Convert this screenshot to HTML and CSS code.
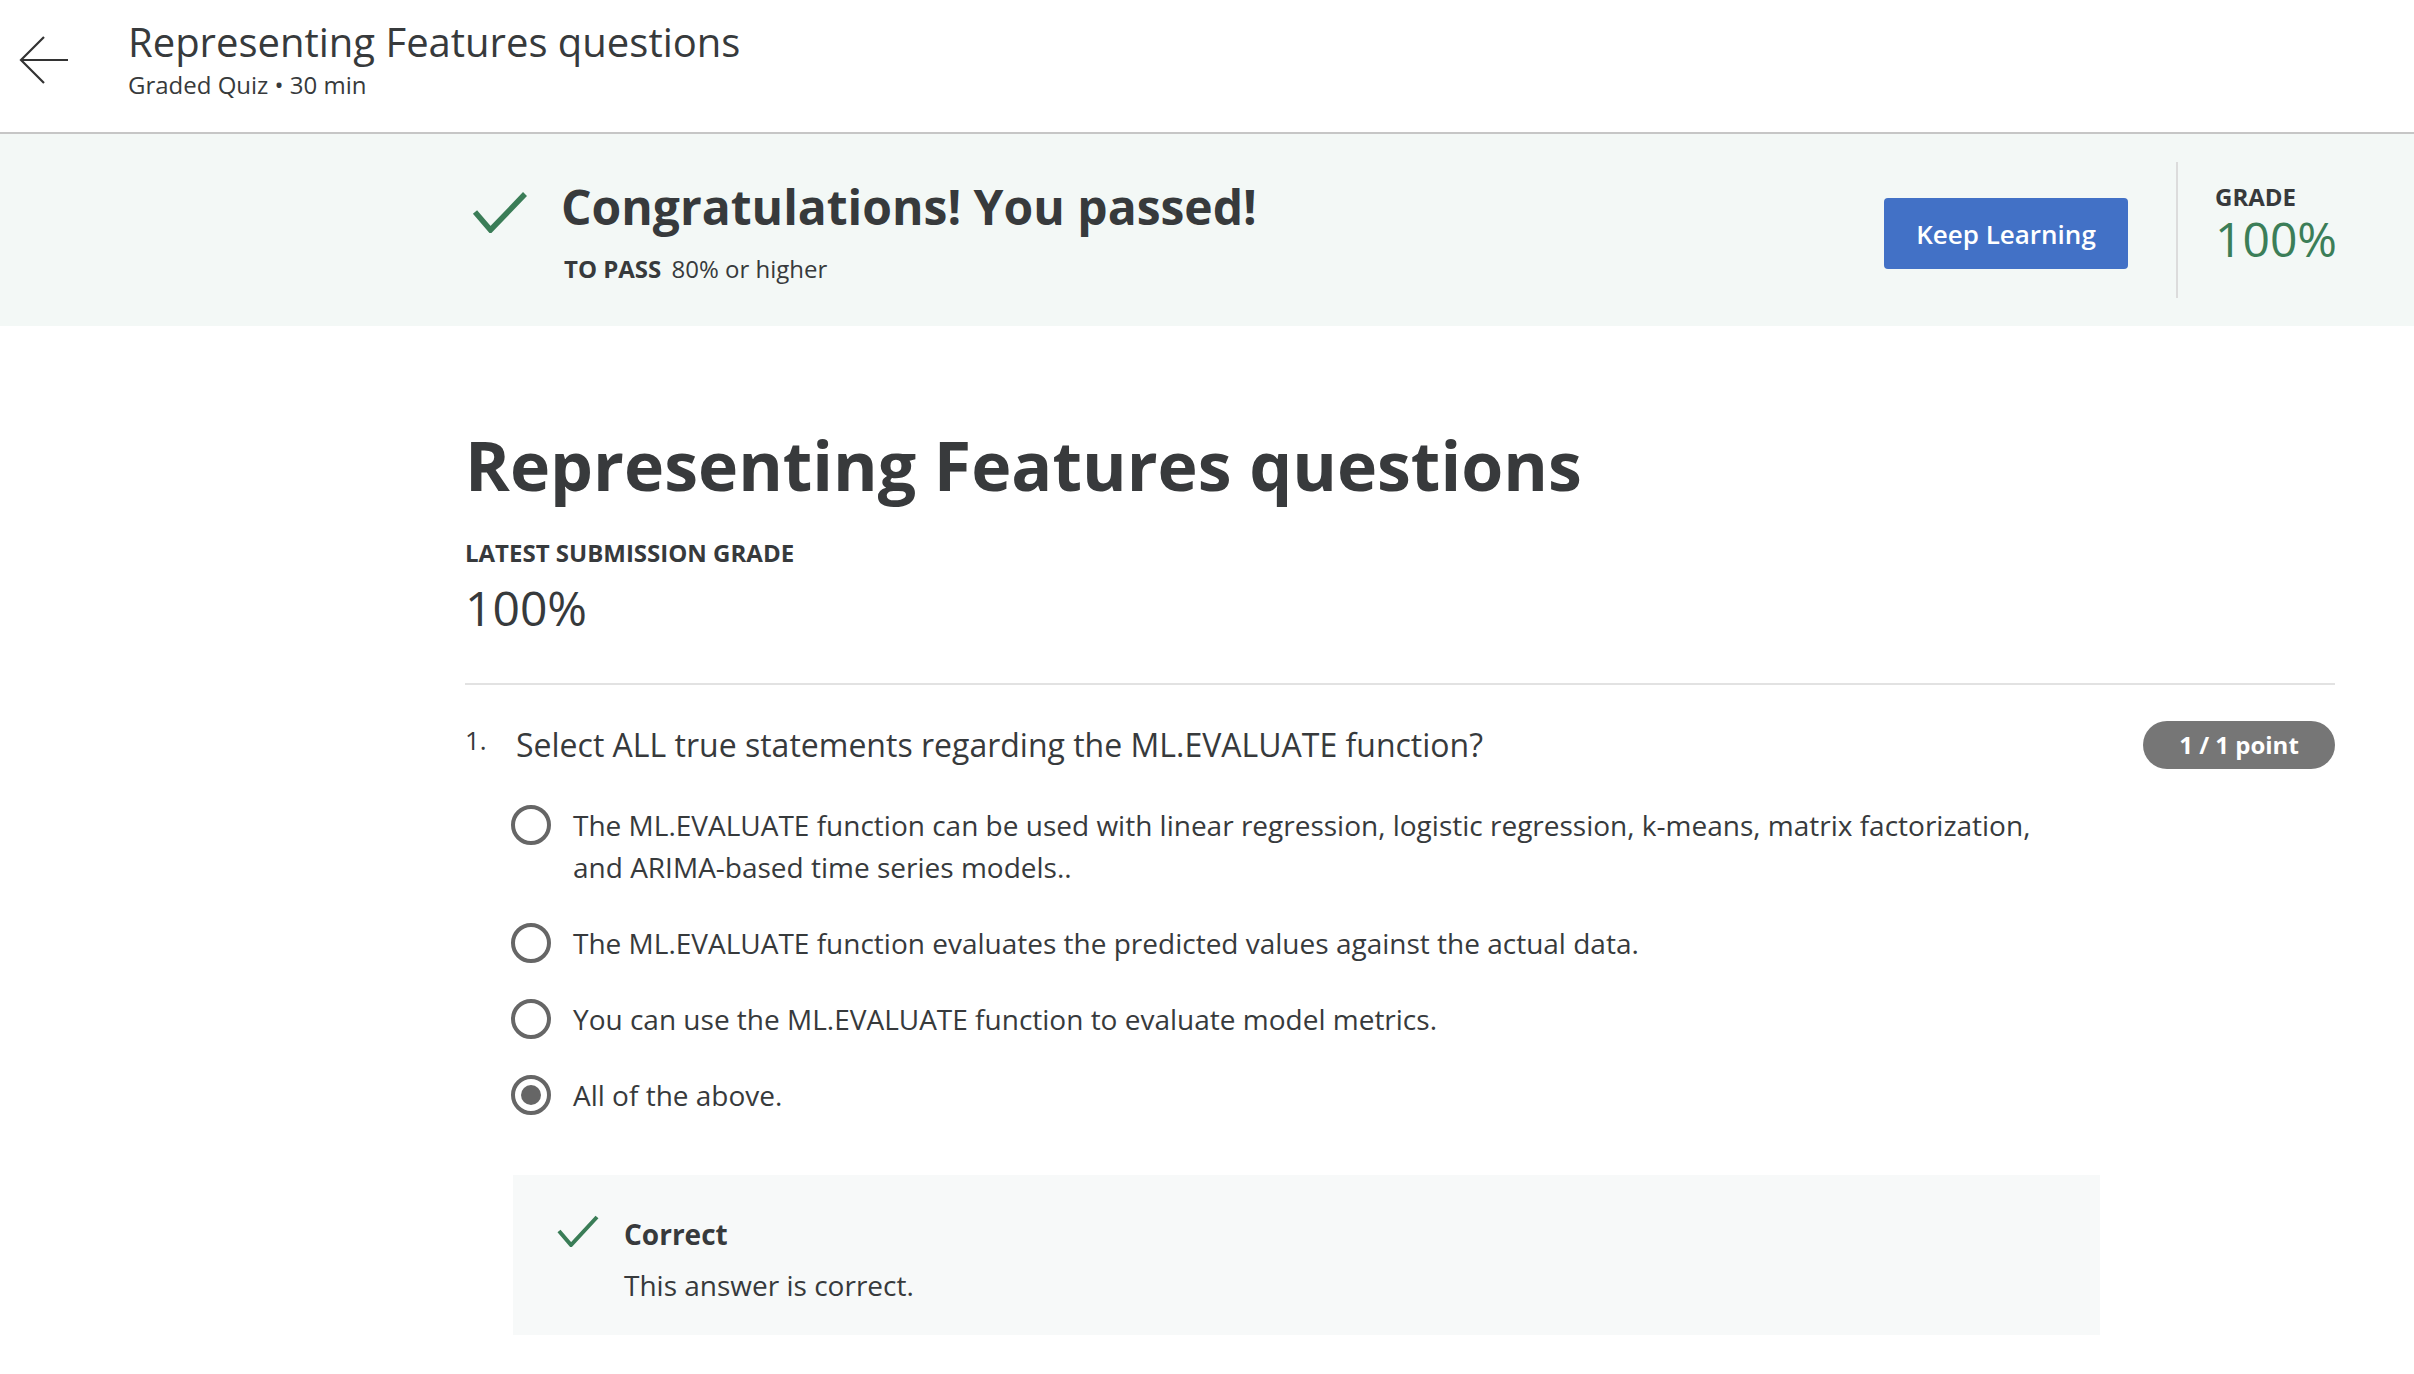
FILE: index.html
```html
<!DOCTYPE html>
<html lang="en">
<head>
<meta charset="utf-8">
<title>Representing Features questions</title>
<link rel="stylesheet" href="styles.css">
</head>
<body>
<header class="topbar">
  <a class="back" href="#" aria-label="Back">
    <svg width="50" height="50" viewBox="0 0 50 50"><path d="M25 2 L2 25 L25 48 M2 25 H49" fill="none" stroke="#333" stroke-width="2.2"/></svg>
  </a>
  <div class="titles">
    <div class="title">Representing Features questions</div>
    <div class="subtitle">Graded Quiz • 30 min</div>
  </div>
</header>

<section class="banner">
  <div class="banner-inner">
    <div class="pass">
      <svg class="check-lg" width="56" height="42" viewBox="0 0 56 42"><path d="M3 21 L18.5 39 L53 3" fill="none" stroke="#3a7d57" stroke-width="5.5"/></svg>
      <div class="pass-text">
        <div class="congrats">Congratulations! You passed!</div>
        <div class="topass"><span class="topass-label">TO PASS</span> 80% or higher</div>
      </div>
    </div>
    <div class="actions">
      <button class="keep">Keep Learning</button>
      <div class="vdiv"></div>
      <div class="grade">
        <div class="grade-label">GRADE</div>
        <div class="grade-value">100%</div>
      </div>
    </div>
  </div>
</section>

<main class="content">
  <h1 class="page-title">Representing Features questions</h1>
  <div class="latest-label">LATEST SUBMISSION GRADE</div>
  <div class="latest-value">100%</div>
  <div class="rule"></div>

  <div class="question">
    <div class="qnum">1.</div>
    <div class="qtext">Select ALL true statements regarding the ML.EVALUATE function?</div>
    <div class="points">1 / 1 point</div>
  </div>

  <div class="options">
    <div class="option">
      <span class="radio"></span>
      <span class="opt-text">The ML.EVALUATE function can be used with linear regression, logistic regression, k-means, matrix factorization, and ARIMA-based time series models..</span>
    </div>
    <div class="option">
      <span class="radio"></span>
      <span class="opt-text">The ML.EVALUATE function evaluates the predicted values against the actual data.</span>
    </div>
    <div class="option">
      <span class="radio"></span>
      <span class="opt-text">You can use the ML.EVALUATE function to evaluate model metrics.</span>
    </div>
    <div class="option">
      <span class="radio selected"></span>
      <span class="opt-text">All of the above.</span>
    </div>
  </div>

  <div class="feedback">
    <svg class="check-sm" width="42" height="32" viewBox="0 0 42 32"><path d="M2 16 L14 30 L40 2" fill="none" stroke="#3a7d57" stroke-width="4"/></svg>
    <div class="fb-text">
      <div class="fb-title">Correct</div>
      <div class="fb-body">This answer is correct.</div>
    </div>
  </div>
</main>
</body>
</html>
```

FILE: styles.css
```css
html, body {
  margin: 0;
  padding: 0;
  background: #ffffff;
}
body {
  font-family: "Open Sans", "Noto Sans", Arial, sans-serif;
  color: #373a3c;
}

/* top bar */
.topbar {
  height: 132px;
  border-bottom: 2px solid #c6c6c6;
  display: flex;
  align-items: flex-start;
  padding-left: 19px;
  box-sizing: content-box;
}
.back {
  display: block;
  margin-top: 35px;
  width: 50px;
  height: 50px;
}
.back svg { display: block; }
.titles {
  margin-left: 59px;
  padding-top: 18px;
}
.title {
  font-size: 40px;
  line-height: 48px;
  font-weight: 400;
  color: #373a3c;
}
.subtitle {
  margin-top: 3px;
  font-size: 24px;
  line-height: 32px;
  color: #373a3c;
}

/* banner */
.banner {
  background: #f3f8f6;
  height: 192px;
}
.banner-inner {
  height: 100%;
  padding: 0 79px 0 465px;
  display: flex;
  align-items: center;
  justify-content: space-between;
}
.pass {
  display: flex;
  align-items: flex-start;
}
.check-lg {
  display: block;
  margin-top: 14px;
  margin-left: 7px;
  margin-right: 33px;
}
.congrats {
  font-size: 48px;
  line-height: 60px;
  font-weight: 700;
  color: #373a3c;
}
.topass {
  margin-top: 17px;
  font-size: 24px;
  line-height: 30px;
  padding-left: 3px;
  color: #373a3c;
}
.topass-label {
  font-weight: 700;
  margin-right: 4px;
}
.actions {
  display: flex;
  align-items: center;
}
.keep {
  width: 244px;
  height: 71px;
  margin-top: 7px;
  border: none;
  border-radius: 4px;
  background: #4271c6;
  color: #ffffff;
  font-family: "Open Sans", "Noto Sans", Arial, sans-serif;
  font-size: 26px;
  font-weight: 600;
  padding: 0;
}
.vdiv {
  width: 2px;
  height: 136px;
  background: #dcdcdc;
  margin: 0 37px 0 48px;
}
.grade {
  padding-bottom: 12px;
  width: 120px;
}
.grade-label {
  font-size: 24px;
  line-height: 30px;
  font-weight: 700;
  color: #373a3c;
}
.grade-value {
  font-size: 48px;
  line-height: 54px;
  font-weight: 400;
  color: #3b7e58;
}

/* content */
.content {
  padding: 99px 79px 40px 465px;
}
.page-title {
  margin: 0;
  font-size: 68px;
  line-height: 80px;
  font-weight: 700;
  color: #383a3c;
}
.latest-label {
  margin-top: 33px;
  font-size: 24px;
  line-height: 30px;
  font-weight: 700;
}
.latest-value {
  margin-top: 12px;
  font-size: 48px;
  line-height: 56px;
  font-weight: 400;
}
.rule {
  margin-top: 47px;
  height: 2px;
  background: #e2e2e2;
}

.question {
  margin-top: 36px;
  display: flex;
  align-items: center;
}
.qnum {
  width: 51px;
  font-size: 26px;
  line-height: 44px;
  align-self: flex-start;
  margin-top: -3px;
}
.qtext {
  flex: 1;
  font-size: 32px;
  line-height: 44px;
}
.points {
  width: 192px;
  height: 48px;
  border-radius: 24px;
  background: #767676;
  color: #ffffff;
  font-size: 24px;
  font-weight: 700;
  line-height: 48px;
  text-align: center;
}

.options {
  margin-top: 35px;
  padding-left: 46px;
  padding-right: 300px;
}
.option {
  display: flex;
  align-items: flex-start;
  margin-bottom: 34px;
}
.option:last-child { margin-bottom: 0; }
.radio {
  flex: none;
  box-sizing: border-box;
  width: 40px;
  height: 40px;
  margin-top: 1px;
  border: 4px solid #666666;
  border-radius: 50%;
  display: flex;
  align-items: center;
  justify-content: center;
}
.radio.selected::after {
  content: "";
  width: 20px;
  height: 20px;
  border-radius: 50%;
  background: #666666;
}
.opt-text {
  margin-left: 22px;
  font-size: 28px;
  line-height: 42px;
}

.feedback {
  margin-top: 59px;
  margin-left: 48px;
  width: 1587px;
  height: 160px;
  box-sizing: border-box;
  background: #f7f9f9;
  padding: 38px 0 0 44px;
  display: flex;
  align-items: flex-start;
}
.check-sm {
  display: block;
  margin-top: 2px;
  margin-right: 25px;
}
.fb-title {
  font-size: 28px;
  line-height: 42px;
  font-weight: 700;
}
.fb-body {
  margin-top: 9px;
  font-size: 28px;
  line-height: 42px;
}
```
